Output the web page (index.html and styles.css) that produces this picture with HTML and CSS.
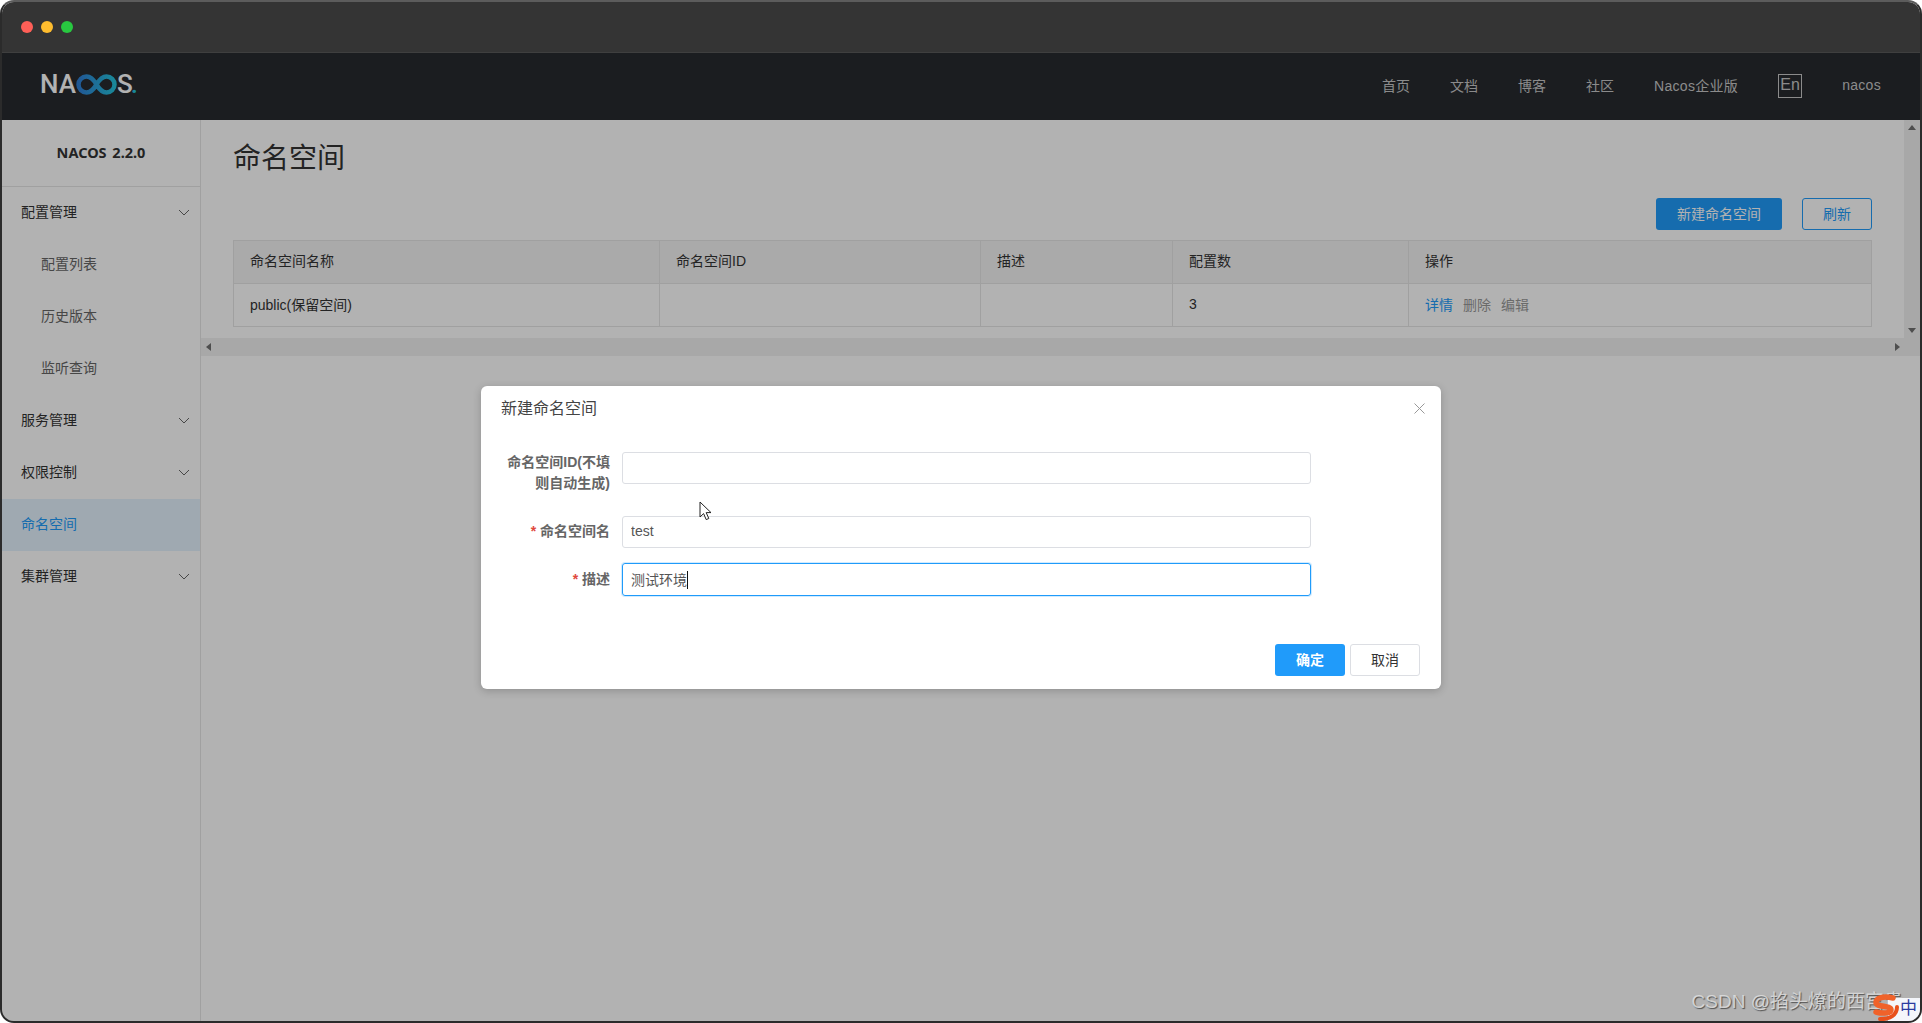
FILE: index.html
```html
<!DOCTYPE html>
<html lang="zh-CN">

<head>
    <meta charset="UTF-8">
    <meta name="viewport" content="width=device-width, initial-scale=1.0">
    <title>Nacos 命名空间</title>
    <link rel="stylesheet" href="styles.css">
</head>

<body>
    <div class="window">
        <div class="titlebar">
            <span class="dot dot-red"></span>
            <span class="dot dot-yellow"></span>
            <span class="dot dot-green"></span>
        </div>

        <div class="app">
            <header class="header">
                <div class="logo">
                    <span>NA</span>
                    <svg class="logo-mark" width="41" height="21" viewBox="0 0 41 21">
                        <defs>
                            <linearGradient id="logoBlue" x1="0" y1="0" x2="1" y2="0">
                                <stop offset="0" stop-color="#2f7fd6" />
                                <stop offset="1" stop-color="#25c2dc" />
                            </linearGradient>
                        </defs>
                        <path d="M20.5 10.5C17 4.5 14 2.5 10.5 2.5A8 8 0 0 0 10.5 18.5C14 18.5 17 16.5 20.5 10.5C24 4.5 27 2.5 30.5 2.5A8 8 0 0 1 30.5 18.5C27 18.5 24 16.5 20.5 10.5Z" fill="none" stroke="url(#logoBlue)" stroke-width="4.5" />
                    </svg>
                    <span>S</span><span class="logo-dot">.</span>
                </div>
                <nav class="nav">
                    <a>首页</a>
                    <a>文档</a>
                    <a>博客</a>
                    <a>社区</a>
                    <a class="latin">Nacos企业版</a>
                    <a class="lang">En</a>
                    <a class="latin">nacos</a>
                </nav>
            </header>

            <div class="layout">
                <aside class="sidebar">
                    <div class="version">NACOS 2.2.0</div>
                    <ul class="menu">
                        <li class="menu-item">配置管理
                            <svg class="chevron" width="12" height="7" viewBox="0 0 12 7"><path d="M1 1l5 5 5-5" /></svg>
                        </li>
                        <li class="menu-item sub">配置列表</li>
                        <li class="menu-item sub">历史版本</li>
                        <li class="menu-item sub">监听查询</li>
                        <li class="menu-item">服务管理
                            <svg class="chevron" width="12" height="7" viewBox="0 0 12 7"><path d="M1 1l5 5 5-5" /></svg>
                        </li>
                        <li class="menu-item">权限控制
                            <svg class="chevron" width="12" height="7" viewBox="0 0 12 7"><path d="M1 1l5 5 5-5" /></svg>
                        </li>
                        <li class="menu-item active">命名空间</li>
                        <li class="menu-item">集群管理
                            <svg class="chevron" width="12" height="7" viewBox="0 0 12 7"><path d="M1 1l5 5 5-5" /></svg>
                        </li>
                    </ul>
                </aside>

                <main class="main">
                    <div class="scroll-area">
                        <div class="content">
                            <h1 class="page-title">命名空间</h1>
                            <div class="toolbar">
                                <button class="btn btn-primary">新建命名空间</button>
                                <button class="btn btn-outline">刷新</button>
                            </div>
                            <table class="table">
                                <colgroup>
                                    <col class="col-name">
                                    <col class="col-id">
                                    <col class="col-desc">
                                    <col class="col-count">
                                    <col>
                                </colgroup>
                                <thead>
                                    <tr>
                                        <th>命名空间名称</th>
                                        <th>命名空间ID</th>
                                        <th>描述</th>
                                        <th>配置数</th>
                                        <th>操作</th>
                                    </tr>
                                </thead>
                                <tbody>
                                    <tr>
                                        <td>public(保留空间)</td>
                                        <td></td>
                                        <td></td>
                                        <td>3</td>
                                        <td class="actions"><a class="link">详情</a><a class="link-off">删除</a><a class="link-off">编辑</a></td>
                                    </tr>
                                </tbody>
                            </table>
                        </div>
                        <div class="vbar">
                            <span class="arrow arrow-up"></span>
                            <span class="arrow arrow-down"></span>
                        </div>
                    </div>
                    <div class="hbar">
                        <span class="arrow arrow-left"></span>
                        <span class="arrow arrow-right"></span>
                    </div>
                </main>
            </div>

            <div class="mask"></div>
        </div>

        <div class="dialog">
            <div class="dialog-title">新建命名空间</div>
            <svg class="dialog-close" width="11" height="11" viewBox="0 0 11 11"><path d="M.5.5l10 10M10.5.5l-10 10" /></svg>
            <form class="form">
                <label class="form-label">命名空间ID(不填则自动生成)</label>
                <input class="input input-tall" type="text">
                <label class="form-label"><span class="required">*</span> 命名空间名</label>
                <input class="input" type="text" value="test">
                <label class="form-label label-last"><span class="required">*</span> 描述</label>
                <div class="input input-focus">测试环境<span class="caret"></span></div>
            </form>
            <div class="dialog-footer">
                <button class="btn btn-confirm">确定</button>
                <button class="btn btn-cancel">取消</button>
            </div>
        </div>

        <svg class="pointer" width="13" height="20" viewBox="0 0 13 20">
            <path d="M1 1v15l3.6-3.4 2.6 6 2.6-1.1-2.6-5.9h4.8z" fill="#fff" stroke="#222" stroke-width="1" />
        </svg>

        <div class="watermark">CSDN @掐头燎的西宫贵</div>

        <div class="tray">
            <svg class="tray-logo" width="30" height="27" viewBox="0 0 30 27">
                <path d="M23 4C14 2 6 3.500 6 8.500c0 5 15 2.500 15 7.500 0 3-8 4-15 2" fill="none" stroke="#f0622a" stroke-width="5.500" stroke-linecap="round" />
                <path d="M27 13c0 8-7 12-17 12" fill="none" stroke="#e8501c" stroke-width="4" stroke-linecap="round" />
            </svg>
            <span class="tray-lang">中</span>
        </div>
    </div>
</body>

</html>
```

FILE: styles.css
```css
* {
    box-sizing: border-box;
}

body {
    margin: 0;
    background-color: #fff;
    font-family: "Liberation Sans", "Noto Sans CJK SC", sans-serif;
    font-size: 14px;
    color: #333;
}

.window {
    position: relative;
    display: flex;
    flex-direction: column;
    width: 1922px;
    height: 1023px;
    overflow: hidden;
    border: 2px solid #2b2b2b;
    border-top-color: #5c5c5c;
    border-radius: 14px;
    background-color: #fff;
}

.titlebar {
    display: flex;
    align-items: center;
    gap: 8px;
    height: 51px;
    padding: 0 0 1px 19px;
    background-color: #343434;
    border-bottom: 1px solid #3f3f3f;
}

.dot {
    width: 12px;
    height: 12px;
    border-radius: 50%;
}

.dot-red {
    background-color: #ff5f57;
}

.dot-yellow {
    background-color: #febc2e;
}

.dot-green {
    background-color: #28c840;
}

.app {
    position: relative;
    display: flex;
    flex-direction: column;
    flex: 1;
}

.header {
    display: flex;
    align-items: center;
    justify-content: space-between;
    height: 67px;
    padding: 0 39px 0 38px;
    background-color: #272a2f;
}

.logo {
    display: flex;
    align-items: center;
    padding-bottom: 5px;
    font-family: Roboto, sans-serif;
    font-size: 26px;
    font-weight: 500;
    line-height: 1;
    color: #fff;
}

.logo-dot {
    margin-left: -2px;
    color: #25c2dc;
}

.nav {
    display: flex;
    align-items: center;
    gap: 40px;
    color: #c8c8c8;
}

.nav a {
    margin-bottom: 3px;
}

.nav .latin {
    letter-spacing: 0.3px;
}

.nav .lang {
    width: 24px;
    height: 24px;
    margin-bottom: 1px;
    border: 1px solid #c8c8c8;
    font-size: 16px;
    line-height: 20px;
    text-align: center;
}

.layout {
    display: flex;
    flex: 1;
}

.sidebar {
    width: 199px;
    border-right: 1px solid #e6e6e6;
}

.version {
    height: 67px;
    border-bottom: 1px solid #e6e6e6;
    font-family: "Noto Sans", sans-serif;
    font-size: 14.500px;
    font-weight: 700;
    line-height: 64px;
    text-align: center;
    word-spacing: 2px;
}

.menu {
    margin: 0;
    padding: 0;
    list-style: none;
}

.menu-item {
    display: flex;
    align-items: center;
    justify-content: space-between;
    height: 52px;
    padding: 0 10px 4px 19px;
}

.menu-item.sub {
    padding-left: 39px;
    color: #666;
}

.menu-item.active {
    background-color: #e4f3fe;
    color: #209bfa;
}

.chevron {
    margin-top: 3px;
}

.chevron path {
    fill: none;
    stroke: #666;
    stroke-width: 1;
}

.main {
    display: flex;
    flex-direction: column;
    flex: 1;
}

.scroll-area {
    display: flex;
    height: 218px;
}

.content {
    flex: 1;
    padding: 21px 32px 0 32px;
}

.page-title {
    margin: 0 0 21px;
    font-size: 28px;
    font-weight: 400;
    line-height: 36px;
}

.toolbar {
    display: flex;
    justify-content: flex-end;
    gap: 20px;
    margin-bottom: 10px;
}

.btn {
    height: 32px;
    padding: 0 0 3px;
    border: 1px solid transparent;
    border-radius: 3px;
    font-family: inherit;
    font-size: 14px;
    cursor: pointer;
}

.btn-primary {
    width: 126px;
    background-color: #209bfa;
    color: #fff;
}

.btn-outline {
    width: 70px;
    border-color: #209bfa;
    background-color: transparent;
    color: #209bfa;
}

.table {
    width: 100%;
    border-collapse: collapse;
    table-layout: fixed;
}

.col-name {
    width: 426px;
}

.col-id {
    width: 321px;
}

.col-desc {
    width: 192px;
}

.col-count {
    width: 236px;
}

.table th,
.table td {
    height: 43px;
    padding: 0 16px 5px;
    border: 1px solid #e6e6e6;
    font-weight: 400;
    text-align: left;
}

.table td {
    padding-bottom: 3px;
}

.table th {
    background-color: #f4f4f4;
}

.link {
    margin-right: 10px;
    color: #209bfa;
}

.link-off {
    margin-right: 10px;
    color: #999;
}

.vbar {
    position: relative;
    width: 16px;
    background-color: #f1f1f1;
}

.hbar {
    position: relative;
    height: 18px;
    background-color: #f1f1f1;
}

.arrow {
    position: absolute;
    width: 0;
    height: 0;
    border: 4px solid transparent;
}

.arrow-up {
    top: 5px;
    left: 4px;
    border-top: 0;
    border-bottom: 5px solid #707070;
}

.arrow-down {
    bottom: 5px;
    left: 4px;
    border-bottom: 0;
    border-top: 5px solid #707070;
}

.arrow-left {
    top: 5px;
    left: 5px;
    border-left: 0;
    border-right: 5px solid #707070;
}

.arrow-right {
    top: 5px;
    right: 20px;
    border-right: 0;
    border-left: 5px solid #707070;
}

.mask {
    position: absolute;
    inset: 0;
    background-color: rgba(0, 0, 0, 0.3);
}

.dialog {
    position: absolute;
    top: 384px;
    left: 479px;
    width: 960px;
    padding: 12px 21px 13px 20px;
    border-radius: 6px;
    background-color: #fff;
    box-shadow: 0 2px 8px rgba(0, 0, 0, 0.2);
}

.dialog-title {
    margin-bottom: 32px;
    font-size: 16px;
    line-height: 22px;
    color: #444;
}

.dialog-close {
    position: absolute;
    top: 17px;
    right: 16px;
}

.dialog-close path {
    fill: none;
    stroke: #999;
    stroke-width: 1;
}

.form {
    display: grid;
    grid-template-columns: 109px 689px;
    column-gap: 12px;
    row-gap: 15px;
    align-items: start;
}

.form-label {
    padding-top: 5px;
    font-weight: 700;
    line-height: 21px;
    color: #666;
    text-align: right;
}

.form-label:first-child {
    padding-top: 0;
}

.form-label.label-last {
    padding-top: 6px;
}

.required {
    color: #e0483e;
}

.input {
    display: block;
    width: 100%;
    height: 32px;
    padding: 0 8px 2px;
    border: 1px solid #dcdee3;
    border-radius: 3px;
    font-family: inherit;
    font-size: 14px;
    line-height: 28px;
    color: #555;
    outline: none;
}

.input-tall {
    margin-bottom: 17px;
}

.input-focus {
    display: flex;
    align-items: center;
    height: 33px;
    padding-bottom: 0;
    border-color: #209bfa;
    box-shadow: 0 0 0 1px rgba(32, 155, 250, 0.2);
}

.caret {
    width: 1px;
    height: 18px;
    background-color: #111;
}

.dialog-footer {
    display: flex;
    justify-content: flex-end;
    gap: 5px;
    margin-top: 48px;
}

.btn-confirm,
.btn-cancel {
    width: 70px;
}

.btn-confirm {
    background-color: #209bfa;
    color: #fff;
    font-weight: 700;
}

.btn-cancel {
    border-color: #dcdee3;
    background-color: #fff;
    color: #333;
}

.pointer {
    position: absolute;
    top: 499px;
    left: 697px;
}

.watermark {
    position: absolute;
    right: 17px;
    bottom: 7px;
    font-size: 19px;
    line-height: 24px;
    color: rgba(225, 225, 225, 0.85);
    text-shadow: 1px 1px 1px rgba(0, 0, 0, 0.55);
    white-space: nowrap;
}

.tray {
    position: absolute;
    right: 0;
    bottom: 0;
    display: flex;
    align-items: flex-end;
}

.tray-logo {
    position: relative;
    z-index: 1;
}

.tray-lang {
    width: 32px;
    height: 23px;
    margin-left: -12px;
    padding-left: 12px;
    background-color: #f4f6fb;
    font-size: 17px;
    line-height: 22px;
    color: #2a3aa0;
}
```
